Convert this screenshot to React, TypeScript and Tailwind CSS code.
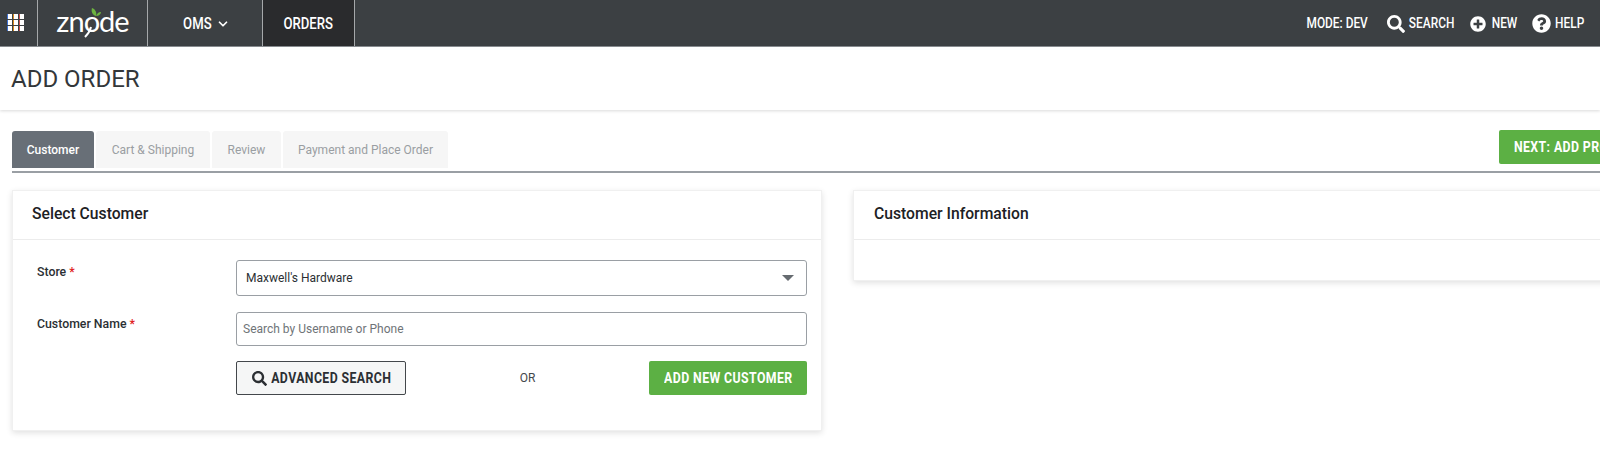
import React from 'react';
import { ChevronDown } from 'lucide-react';
import { FaSearch, FaPlusCircle, FaQuestionCircle } from 'react-icons/fa';

const Cond: React.FC<{ children: React.ReactNode; className?: string }> = ({ children, className }) => (
    <span className={`inline-block whitespace-nowrap scale-x-[0.82] ${className ?? ''}`}>{children}</span>
);

const tabs = [
    { label: 'Customer', width: 'w-[82px]', active: true },
    { label: 'Cart & Shipping', width: 'w-[114px]' },
    { label: 'Review', width: 'w-[69px]' },
    { label: 'Payment and Place Order', width: 'w-[165px]' },
];

const fringe = ['#3b6fd0', '#d98a1f', '#c9504a'];

const Logo = () => (
    <div className="relative text-white text-[29px] leading-none font-['Lato',sans-serif] font-normal tracking-[-1px] pb-[5px]">
        znode
        <svg className="absolute left-[35px] top-[1px]" width="10" height="10" viewBox="0 0 10 10">
            <path d="M5 9C1 8 0 4 1 1c3 1 5 4 4 8z" fill="#6db33f" />
            <path d="M5 9c1-2 2-4 5-4 0 2-2 4-5 4z" fill="#6db33f" />
        </svg>
        <svg className="absolute left-[26px] top-[20px]" width="12" height="12" viewBox="0 0 12 12" fill="none">
            <path d="M9 1C8 5 6 8 3 11" stroke="#fff" strokeWidth="2" />
        </svg>
    </div>
);

const App: React.FC = () => {
    return (
        <div className="w-[1600px] h-[476px] overflow-hidden bg-white font-['Roboto',sans-serif]">
            <header className="h-[47px] flex bg-[#3c4043] border-b border-[#8b8f93] text-white text-[14.5px] font-medium">
                <div className="w-[38px] border-r border-[#a5a8aa] flex items-center justify-center pr-[6px]">
                    <svg width="17" height="18" viewBox="0 0 17 18">
                        {[0, 6, 12].map(y => [0, 6, 12].map((x, i) => (
                            <g key={`${x}-${y}`}>
                                <rect x={x} y={y} width="5" height="5" fill="#fff" />
                                <rect x={x} y={y} width="1" height="5" fill={fringe[i]} />
                            </g>
                        )))}
                    </svg>
                </div>
                <div className="w-[110px] border-r border-[#a5a8aa] flex items-center justify-center">
                    <Logo />
                </div>
                <div className="w-[115px] border-r border-[#a5a8aa] flex items-center justify-center pt-[1px]">
                    <Cond className="text-[16px]">OMS</Cond>
                    <ChevronDown size={14} strokeWidth={3} className="ml-[2px]" />
                </div>
                <div className="w-[92px] border-r border-[#a5a8aa] bg-[#2a2b2d] flex items-center justify-center pt-[1px]">
                    <Cond className="text-[16px]">ORDERS</Cond>
                </div>
                <div className="ml-auto flex items-center pr-[14px] pt-[1px]">
                    <Cond className="w-[72px] mr-[15px] text-center">MODE: DEV</Cond>
                    <FaSearch size={18} className="mr-[-1px]" />
                    <Cond className="w-[54px] mr-[12px] text-center">SEARCH</Cond>
                    <FaPlusCircle size={16} className="mr-[3px]" />
                    <Cond className="w-[30px] mr-[13px] text-center">NEW</Cond>
                    <FaQuestionCircle size={19} className="mr-[1px]" />
                    <Cond className="w-[34px] text-center">HELP</Cond>
                </div>
            </header>

            <div className="h-[63px] flex items-center px-[11px] shadow-[0_1px_3px_rgba(0,0,0,0.15)]">
                <h1 className="text-[24px] text-[#33373a] font-normal">ADD ORDER</h1>
            </div>

            <div className="w-[1680px] pl-3 pt-[20px]">
                <div className="flex items-end justify-between border-b-2 border-[#9a9fa4] h-[43px] pb-[3px]">
                    <div className="flex gap-[2px] self-end">
                        {tabs.map(tab => (
                            <div
                                key={tab.label}
                                className={`${tab.width} h-[37px] rounded-t-[3px] flex items-center justify-center text-[12px] ${tab.active ? 'bg-[#686f77] text-white font-medium' : 'bg-[#f6f6f6] text-[#9a9ea2]'}`}
                            >
                                {tab.label}
                            </div>
                        ))}
                    </div>
                    <button className="w-[181px] h-[34px] mb-[4px] pr-[16px] rounded-[2px] bg-[#5cb044] text-white text-[15px] font-bold tracking-[0.5px] flex items-center justify-center">
                        <Cond>NEXT: ADD PRODUCTS</Cond>
                    </button>
                </div>

                <div className="flex gap-[31px] mt-[17px] items-start">
                    <section className="w-[810px] h-[241px] border border-[#f0f0f0] shadow-[0_2px_6px_rgba(0,0,0,0.12)]">
                        <div className="h-[49px] pb-[2px] border-b border-[#ececec] flex items-center px-[19px] text-[15.7px] font-medium text-[#1d2124]">
                            Select Customer
                        </div>
                        <div className="pt-[20px] pl-[24px] pr-[14px]">
                            <div className="flex">
                                <label className="w-[199px] text-[12.3px] font-medium text-[#2b2f33] pt-[3px]">
                                    Store <span className="text-[#e02020]">*</span>
                                </label>
                                <div className="flex-1 h-[36px] border border-[#9a9fa4] rounded-[3px] flex items-center justify-between pl-[9px] pr-[12px] text-[12px] text-[#2b2f33]">
                                    Maxwell's Hardware
                                    <span className="w-0 h-0 border-x-[6px] border-x-transparent border-t-[6px] border-t-[#666b70]" />
                                </div>
                            </div>
                            <div className="flex mt-[16px]">
                                <label className="w-[199px] text-[12.3px] font-medium text-[#2b2f33] pt-[3px]">
                                    Customer Name <span className="text-[#e02020]">*</span>
                                </label>
                                <input
                                    placeholder="Search by Username or Phone"
                                    className="flex-1 h-[34px] border border-[#9a9fa4] rounded-[3px] px-[6px] text-[12px] placeholder:text-[#6f7478] outline-none"
                                />
                            </div>
                            <div className="flex items-center justify-between mt-[15px] ml-[199px]">
                                <button className="w-[170px] h-[34px] pl-[18px] border border-[#43474b] rounded-[2px] bg-[#f5f6f6] flex items-center justify-center text-[15px] font-bold tracking-[0.5px] text-[#2b2f33]">
                                    <FaSearch size={15} className="mr-[-9px] ml-[-4px] shrink-0" />
                                    <Cond>ADVANCED SEARCH</Cond>
                                </button>
                                <span className="text-[12px] text-[#44484c]">OR</span>
                                <button className="w-[158px] h-[34px] rounded-[2px] bg-[#5cb044] text-white text-[15px] font-bold tracking-[0.5px] flex items-center justify-center">
                                    <Cond>ADD NEW CUSTOMER</Cond>
                                </button>
                            </div>
                        </div>
                    </section>

                    <section className="w-[800px] h-[91px] border border-[#f0f0f0] shadow-[0_2px_6px_rgba(0,0,0,0.12)]">
                        <div className="h-[49px] pb-[2px] border-b border-[#ececec] flex items-center px-[20px] text-[15.7px] font-medium text-[#1d2124]">
                            Customer Information
                        </div>
                    </section>
                </div>
            </div>
        </div>
    );
};

export default App;
